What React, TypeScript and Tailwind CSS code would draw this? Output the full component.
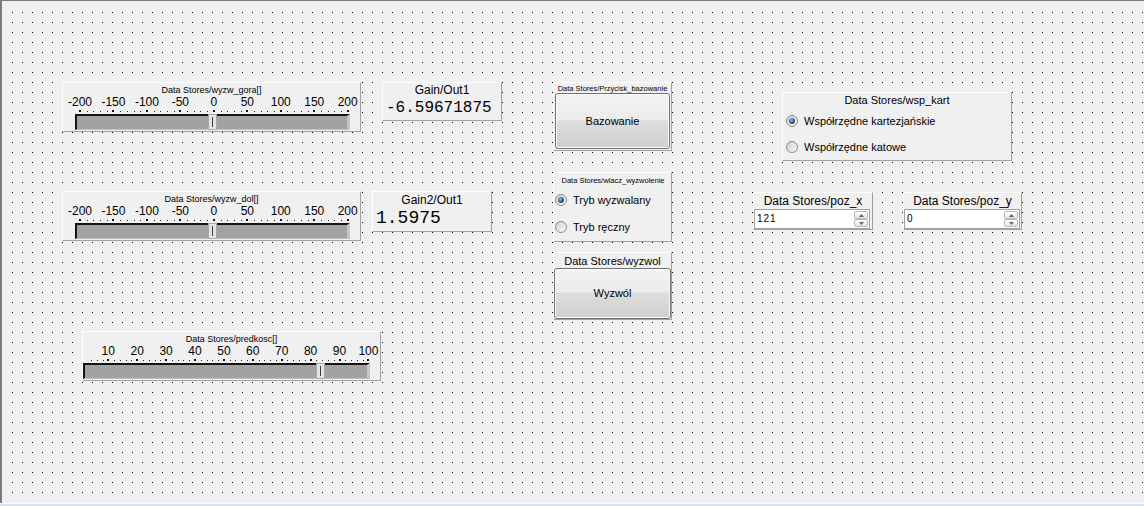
import React from 'react';

const panel = 'border border-t-white border-l-white border-r-[#a0a0a0] border-b-[#a0a0a0] bg-[#f0f0f0]';

type SliderProps = {
  title: string;
  labels: number[];
  ticks: number[];
  isMajor: (v: number) => boolean;
  pos: (v: number) => number;
  trackClass: string;
  thumb: number;
  className?: string;
};

function SliderPanel({ title, labels, ticks, isMajor, pos, trackClass, thumb, className = '' }: SliderProps) {
  return (
    <div className={`w-[299px] h-[50px] shrink-0 flex flex-col pt-[2px] ${panel} ${className}`}>
      <div className="text-[9px] leading-[10px] text-center whitespace-nowrap">{title}</div>
      <div className="relative h-[12px] mt-[1px] text-[12px] leading-[12px]">
        {labels.map((v) => (
          <span key={v} className="absolute top-0 -translate-x-1/2 whitespace-nowrap" style={{ left: pos(v) }}>
            {v}
          </span>
        ))}
      </div>
      {/* tick marks */}
      <svg width={297} height={5} className="block" shapeRendering="crispEdges">
        {ticks.map((v) =>
          isMajor(v) ? (
            <rect key={v} x={Math.round(pos(v)) - 1} y={2} width={2} height={2} fill="#111" />
          ) : (
            <rect key={v} x={Math.round(pos(v))} y={3} width={1} height={1} fill="#222" />
          )
        )}
      </svg>
      <div
        className={`relative h-[16px] mt-[1px] border-t-2 border-l-2 border-t-[#141414] border-l-[#141414] border-r-[3px] border-r-[#c6c6c6] border-b border-b-[#bdbdbd] bg-[#a2a2a2] ${trackClass}`}
      >
        <div
          className="absolute top-[-2px] bottom-[-1px] w-[9px] flex items-center justify-center bg-[#e4e4e4] border border-[#a8a8a8]"
          style={{ left: thumb - 4.5 - 2 }}
        >
          <div className="w-px h-[10px] bg-[#3c3c3c]" />
        </div>
      </div>
    </div>
  );
}

function Btn({ label, className = '' }: { label: string; className?: string }) {
  return (
    <div
      className={`flex items-center justify-center rounded-[3px] border border-[#707070] bg-[linear-gradient(#f3f3f3,#ebebeb_47%,#dddddd_50%,#cfcfcf)] shadow-[inset_0_0_0_1px_#fbfbfb] text-[11px] ${className}`}
    >
      {label}
    </div>
  );
}

function Radio({ checked, label, className = '' }: { checked?: boolean; label: string; className?: string }) {
  return (
    <div className={`flex items-center h-[14px] ${className}`}>
      <div className="w-[12px] h-[12px] rounded-full border border-[#8c8c8c] bg-[linear-gradient(135deg,#cfcfcf,#f9f9f9)] flex items-center justify-center">
        {checked && (
          <div className="w-[6px] h-[6px] rounded-full bg-[radial-gradient(circle_at_40%_35%,#8cc0ec,#1b4f86_60%,#0f3059)]" />
        )}
      </div>
      <span className="ml-[6px] text-[11px] leading-[14px] whitespace-nowrap">{label}</span>
    </div>
  );
}

function SpinBtn({ up }: { up?: boolean }) {
  return (
    <div className="w-[14px] h-[8px] flex items-center justify-center rounded-[2px] border border-[#b8b8b8] bg-[linear-gradient(#ffffff,#e4e4e4)]">
      <svg width={5} height={3} viewBox="0 0 5 3">
        <path d={up ? 'M0 3L2.5 0L5 3Z' : 'M0 0L2.5 3L5 0Z'} fill="#56647f" />
      </svg>
    </div>
  );
}

function SpinField({ title, value, className = '', w = 'w-[120px]' }: { title: string; value: string; className?: string; w?: string }) {
  return (
    <div className={`${w} h-[38px] flex flex-col pt-[1px] ${panel} ${className}`}>
      <div className="text-[12px] leading-[14px] text-center whitespace-nowrap">{title}</div>
      <div className="mt-[1px] h-[20px] w-[116px] flex items-center justify-between bg-white border border-[#a0a0a0] pl-[2px] pr-[1px]">
        <span className="text-[10px] leading-[12px] tracking-[1px]">{value}</span>
        <div className="flex flex-col">
          <SpinBtn up />
          <SpinBtn />
        </div>
      </div>
    </div>
  );
}

const range = (a: number, b: number, s: number) => {
  const out: number[] = [];
  for (let v = a; v <= b; v += s) out.push(v);
  return out;
};

const pos1 = (v: number) => 17 + (v + 200) * 0.66925;
const pos3 = (v: number) => -3.6 + 2.89 * v;

export default function App() {
  return (
    <div className="w-[1144px] h-[506px] flex flex-col overflow-hidden font-['Liberation_Sans',Arial,sans-serif] text-black">
      <div className="flex-1 flex flex-col border-t border-l-2 border-[#7a7a7a] bg-[#f0f0f0] pt-[9px] pl-[9px] pb-[2px]">
        <div className="flex-1 flex items-start bg-[linear-gradient(90deg,#f0f0f0_9px,transparent_9px),linear-gradient(#f0f0f0_9px,#000_9px)] bg-[size:10px_10px] bg-[position:2px_3px]">
          {/* sliders + gains */}
          <div className="ml-[51px] mt-[72px] w-[440px] shrink-0 flex flex-col">
            <div className="flex items-start">
              <SliderPanel
                title="Data Stores/wyzw_gora[]"
                labels={range(-200, 200, 50)}
                ticks={range(-200, 200, 10)}
                isMajor={(v) => v % 50 === 0}
                pos={pos1}
                trackClass="ml-[12px] w-[275px]"
                thumb={137.5}
              />
              <div className={`ml-[21px] w-[120px] h-[39px] flex flex-col ${panel}`}>
                <div className="text-[12px] leading-[14px] text-center">Gain/Out1</div>
                <div className="mt-[2px] pl-[3px] font-['Liberation_Mono',monospace] text-[16px] leading-[18px] whitespace-nowrap">
                  -6.59671875
                </div>
              </div>
            </div>
            <div className="flex items-start mt-[59px]">
              <SliderPanel
                title="Data Stores/wyzw_dol[]"
                labels={range(-200, 200, 50)}
                ticks={range(-200, 200, 10)}
                isMajor={(v) => v % 50 === 0}
                pos={pos1}
                trackClass="ml-[12px] w-[275px]"
                thumb={137.5}
              />
              <div className={`ml-[11px] w-[120px] h-[41px] flex flex-col pt-[1px] ${panel}`}>
                <div className="text-[12px] leading-[14px] text-center">Gain2/Out1</div>
                <div className="mt-[1px] pl-[3px] font-['Liberation_Mono',monospace] text-[18px] leading-[20px]">1.5975</div>
              </div>
            </div>
            <SliderPanel
              className="mt-[90px] ml-[20px]"
              title="Data Stores/predkosc[]"
              labels={range(10, 100, 10)}
              ticks={range(4, 100, 2)}
              isMajor={(v) => v % 10 === 0}
              pos={pos3}
              trackClass="w-[287px]"
              thumb={237.5}
            />
          </div>

          {/* buttons column */}
          <div className="ml-[51px] mt-[72px] w-[119px] shrink-0 flex flex-col">
            <div className={`h-[69px] flex flex-col pt-[2px] px-[1px] ${panel}`}>
              <div className="text-[7.5px] leading-[8px] text-center whitespace-nowrap">Data Stores/Przycisk_bazowanie</div>
              <Btn label="Bazowanie" className="h-[56px]" />
            </div>
            <div className={`mt-[21px] h-[70px] flex flex-col pt-[3px] pl-[1px] ${panel}`}>
              <div className="text-[7.5px] leading-[9px] text-center whitespace-nowrap">Data Stores/wlacz_wyzwolenie</div>
              <Radio checked label="Tryb wyzwalany" className="mt-[8px]" />
              <Radio label="Tryb ręczny" className="mt-[13px]" />
            </div>
            <div className={`mt-[10px] h-[68px] flex flex-col pt-[2px] ${panel}`}>
              <div className="text-[11px] leading-[13px] text-center whitespace-nowrap">Data Stores/wyzwol</div>
              <Btn label="Wyzwól" className="h-[51px]" />
            </div>
          </div>

          {/* coordinates column */}
          <div className="ml-[81px] mt-[82px] shrink-0 flex flex-col">
            <div className={`ml-[29px] w-[230px] h-[69px] flex flex-col pt-[1px] ${panel}`}>
              <div className="text-[11px] leading-[13px] text-center">Data Stores/wsp_kart</div>
              <Radio checked label="Współrzędne kartezjańskie" className="mt-[7px] ml-[3px]" />
              <Radio label="Współrzędne katowe" className="mt-[12px] ml-[3px]" />
            </div>
            <div className="flex items-start mt-[31px]">
              <SpinField title="Data Stores/poz_x" value="121" />
              <SpinField title="Data Stores/poz_y" value="0" className="ml-[30px]" w="w-[119px]" />
            </div>
          </div>
        </div>
      </div>
      <div className="h-px bg-[#f9f9f9]" />
      <div className="h-[2px] bg-[#d9e4f1]" />
    </div>
  );
}
